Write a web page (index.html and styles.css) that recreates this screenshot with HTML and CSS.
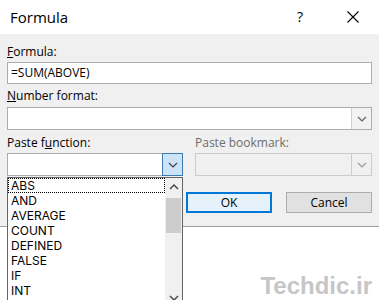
FILE: index.html
```html
<!DOCTYPE html>
<html>
<head>
<meta charset="utf-8">
<link rel="stylesheet" href="styles.css">
</head>
<body>
<div class="titlebar">
  <span class="title">Formula</span>
  <span class="help">?</span>
  <span class="close"><svg width="12" height="12" viewBox="0 0 12 12"><path d="M0.5 0.5L11.5 11.5M11.5 0.5L0.5 11.5" stroke="#000" stroke-width="1.1" fill="none"/></svg></span>
</div>
<div class="dialog">
  <div class="label"><u>F</u>ormula:</div>
  <div class="field formula">=SUM(ABOVE)</div>
  <div class="label gap4"><u>N</u>umber format:</div>
  <div class="combo">
    <div class="combo-text"></div>
    <div class="drop"><svg width="10" height="6" viewBox="0 0 10 6"><path d="M1 1L5 5L9 1" stroke="#606060" stroke-width="1.2" fill="none"/></svg></div>
  </div>
  <div class="paste-row">
    <div class="col">
      <div class="label">Paste f<u>u</u>nction:</div>
      <div class="combo">
        <div class="combo-text"></div>
        <div class="drop active"><svg width="10" height="6" viewBox="0 0 10 6"><path d="M1 1L5 5L9 1" stroke="#404040" stroke-width="1.2" fill="none"/></svg></div>
      </div>
    </div>
    <div class="col">
      <div class="label disabled">Paste bookmark:</div>
      <div class="combo off">
        <div class="combo-text"></div>
        <div class="drop"><svg width="10" height="6" viewBox="0 0 10 6"><path d="M1 1L5 5L9 1" stroke="#9a9a9a" stroke-width="1.2" fill="none"/></svg></div>
      </div>
    </div>
  </div>
  <div class="buttons">
    <div class="btn default">OK</div>
    <div class="btn">Cancel</div>
  </div>
</div>
<div class="footer"><span class="mark">Techdic.ir</span></div>

<div class="list">
  <div class="items">
    <div class="item focus">ABS</div>
    <div class="item">AND</div>
    <div class="item">AVERAGE</div>
    <div class="item">COUNT</div>
    <div class="item">DEFINED</div>
    <div class="item">FALSE</div>
    <div class="item">IF</div>
    <div class="item">INT</div>
  </div>
  <div class="scrollbar">
    <div class="arrow"><svg width="10" height="6" viewBox="0 0 10 6"><path d="M1 5L5 1L9 5" stroke="#404040" stroke-width="1.4" fill="none"/></svg></div>
    <div class="thumb"></div>
    <div class="track"></div>
    <div class="arrow"><svg width="10" height="6" viewBox="0 0 10 6"><path d="M1 1L5 5L9 1" stroke="#404040" stroke-width="1.4" fill="none"/></svg></div>
  </div>
</div>
</body>
</html>
```
FILE: styles.css
```css
html, body {
  margin: 0;
  padding: 0;
  background: #ffffff;
  overflow: hidden;
}
body {
  width: 379px;
  height: 300px;
  position: relative;
  font-family: "Open Sans", "Noto Sans", sans-serif;
  font-size: 12px;
  color: #000;
}
.titlebar {
  height: 34px;
  display: flex;
  align-items: center;
  background: #fff;
}
.title {
  font-size: 15px;
  margin-left: 10px;
  flex: 1;
  margin-top: -1px;
}
.help {
  font-size: 14px;
  width: 9px;
  margin-right: 41px;
  margin-top: -1px;
}
.close {
  display: flex;
  margin-right: 20px;
}
.dialog {
  background: #f0f0f0;
  height: 182px;
  padding: 10px 7px 0 7px;
  border-bottom: 1px solid #a0a0a0;
}
.label {
  height: 16px;
  line-height: 16px;
  margin-bottom: 2px;
}
.label.gap4 { margin-top: 4px; margin-bottom: 3px; }
.label.disabled { color: #6d6d6d; }
.field {
  height: 20px;
  line-height: 20px;
  background: #fff;
  border: 1px solid #adadad;
  padding-left: 3px;
}
.combo {
  height: 23px;
  display: flex;
  background: #fff;
  border: 1px solid #adadad;
  box-sizing: border-box;
}
.combo-text { flex: 1; }
.drop {
  width: 19px;
  display: flex;
  align-items: center;
  justify-content: center;
  border-left: 1px solid #d0d0d0;
  background: #f2f2f2;
}
.drop.active {
  background: #cce4f7;
  border: 1px solid #3d7ab0;
  margin: -1px -1px -1px 0;
  width: 19px;
}
.combo.off {
  background: #f0f0f0;
  border-color: #cccccc;
}
.combo.off .drop {
  background: #f0f0f0;
  border-left-color: #cccccc;
}
.paste-row {
  display: flex;
  gap: 12px;
  margin-top: 5px;
}
.col { width: 176px; }
.col + .col { width: 177px; }
.buttons {
  display: flex;
  justify-content: flex-end;
  gap: 14px;
  margin-top: 16px;
}
.btn {
  width: 86px;
  height: 21px;
  box-sizing: border-box;
  border: 1px solid #adadad;
  background: #e1e1e1;
  display: flex;
  align-items: center;
  justify-content: center;
}
.btn.default {
  border: 2px solid #0078d7;
  background: #e5f1fb;
}
.footer {
  display: flex;
  justify-content: flex-end;
  padding: 45px 7px 0 0;
}
.mark {
  font-family: "Liberation Sans", Arial, sans-serif;
  font-weight: bold;
  font-size: 24px;
  color: #c6c6c6;
  line-height: 28px;
}
.list {
  position: absolute;
  left: 7px;
  top: 177px;
  width: 176px;
  height: 130px;
  box-sizing: border-box;
  border: 1px solid #646464;
  background: #fff;
  display: flex;
}
.items {
  flex: 1;
}
.item {
  height: 15px;
  line-height: 15px;
  padding-left: 3px;
  font-family: Inter, "Open Sans", sans-serif;
  font-size: 12px;
}
.item.focus {
  outline: 1px dotted #000;
  outline-offset: -1px;
}
.scrollbar {
  width: 17px;
  background: #f0f0f0;
  display: flex;
  flex-direction: column;
}
.arrow {
  height: 17px;
  display: flex;
  align-items: center;
  justify-content: center;
}
.thumb {
  height: 35px;
  margin: 3px 1px 0 1px;
  background: #cdcdcd;
}
.track { flex: 1; }
```
